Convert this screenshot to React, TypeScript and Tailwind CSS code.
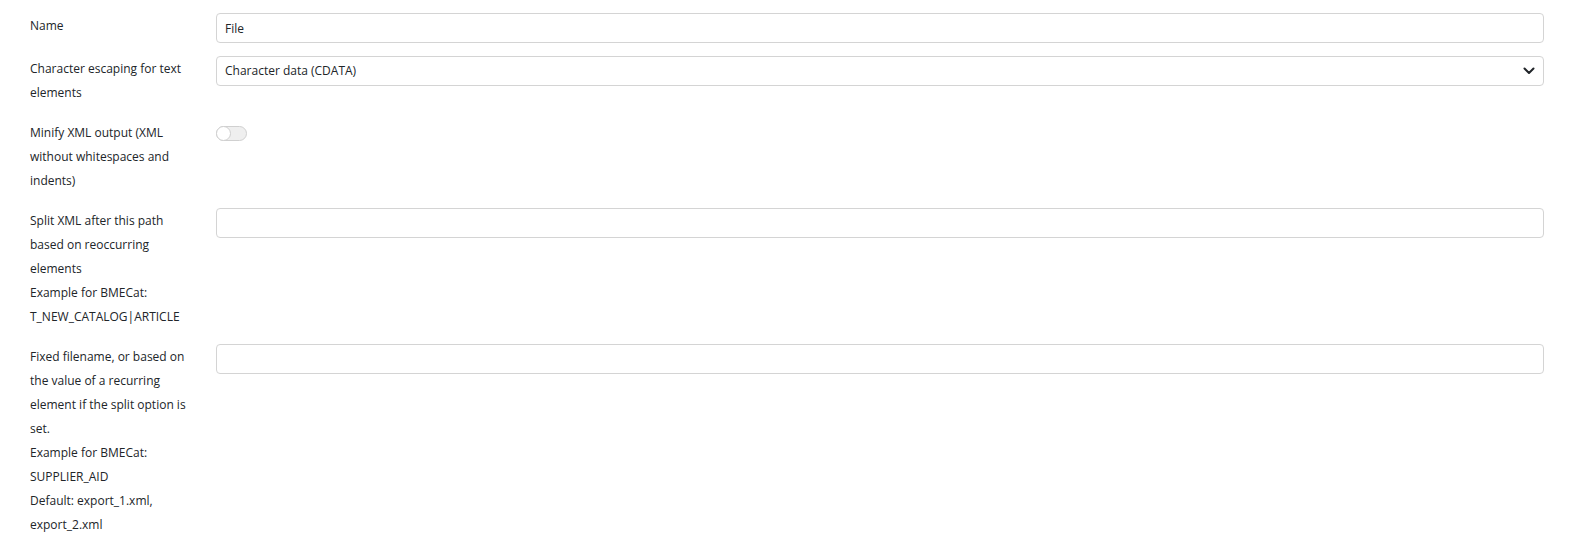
import React from 'react';

const labelCls = "w-[186px] shrink-0 pr-[16px] pt-[1px] pb-[2px] leading-[24px]";

const TextInput = ({ value = "" }: { value?: string }) => (
    <input
        type="text"
        defaultValue={value}
        className="w-full h-[30px] border border-[#d4d4d4] rounded-[4px] px-[8px] text-[12px] text-[#212529] bg-white outline-none"
    />
);

const Field = ({ label, children }: { label: React.ReactNode; children: React.ReactNode }) => (
    <div className="flex mb-[13px]">
        <div className={labelCls}>{label}</div>
        <div className="flex-1">{children}</div>
    </div>
);

const App: React.FC = () => {
    return (
        <div className="min-h-screen bg-white pt-[13px] pl-[30px] pr-[28px] font-['Open_Sans',sans-serif] text-[12px] text-[#212529]">
            <Field label="Name">
                <TextInput value="File" />
            </Field>

            <Field label="Character escaping for text elements">
                <div className="relative">
                    <select
                        defaultValue="cdata"
                        className="w-full h-[30px] appearance-none border border-[#d4d4d4] rounded-[4px] pl-[8px] pr-[30px] text-[12px] text-[#212529] bg-white outline-none"
                    >
                        <option value="cdata">Character data (CDATA)</option>
                        <option value="entities">Entities</option>
                    </select>
                    <svg
                        className="absolute right-[9px] top-1/2 -translate-y-1/2 pointer-events-none"
                        width="12"
                        height="8"
                        viewBox="0 0 12 8"
                        fill="none"
                    >
                        <path d="M1.5 1.5l4.5 4.5 4.5-4.5" stroke="#212529" strokeWidth="2" strokeLinecap="round" strokeLinejoin="round" />
                    </svg>
                </div>
            </Field>

            <Field label="Minify XML output (XML without whitespaces and indents)">
                {/* Switch */}
                <div className="mt-[6px] w-[31px] h-[15px] rounded-full border border-[#d0d0d0] bg-[#efefef] relative">
                    <div className="absolute left-[-1px] top-[-1px] w-[15px] h-[15px] rounded-full bg-white border border-[#cfcfcf]" />
                </div>
            </Field>

            <Field
                label={
                    <>
                        Split XML after this path based on reoccurring elements
                        <br />
                        Example for BMECat: T_NEW_CATALOG|ARTICLE
                    </>
                }
            >
                <TextInput />
            </Field>

            <Field
                label={
                    <>
                        Fixed filename, or based on the value of a recurring element if the split option is set.
                        <br />
                        Example for BMECat: SUPPLIER_AID
                        <br />
                        Default: export_1.xml, export_2.xml
                    </>
                }
            >
                <TextInput />
            </Field>
        </div>
    );
};

export default App;
